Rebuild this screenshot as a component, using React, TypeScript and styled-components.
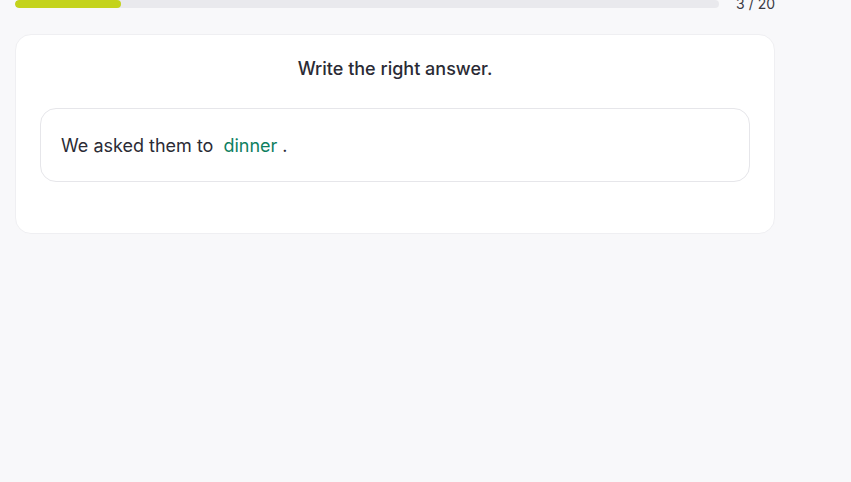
import React from "react";
import styled, { createGlobalStyle } from "styled-components";

const Global = createGlobalStyle`
  html, body { margin: 0; padding: 0; background: #f8f8fa; }
  body { font-family: Inter, "Noto Sans", sans-serif; color: #2b2b35; overflow: hidden; }
`;

const Page = styled.div`
  width: 760px;
  padding-left: 15px;
  margin-top: -7px;
`;

const TopRow = styled.div`
  display: flex;
  align-items: center;
  gap: 17px;
  height: 21px;
  margin-bottom: 20px;
`;

const Track = styled.div`
  flex: 1;
  height: 8px;
  border-radius: 4px;
  background: #e9e9ed;
  overflow: hidden;
`;

const Fill = styled.div`
  height: 100%;
  border-radius: 4px;
  background: #c4d31c;
`;

const Counter = styled.span`
  font-size: 14px;
  color: #3a3a44;
  white-space: nowrap;
`;

const Card = styled.div`
  box-sizing: border-box;
  background: #fff;
  border: 1px solid #efeff2;
  border-radius: 16px;
  padding: 22px 24px 51px;
`;

const Title = styled.h2`
  margin: 0 0 27px;
  text-align: center;
  font-size: 18px;
  line-height: 24px;
  font-weight: 500;
  color: #2b2b35;
`;

const Sentence = styled.div`
  box-sizing: border-box;
  height: 74px;
  display: flex;
  align-items: center;
  padding: 0 20px;
  border: 1px solid #e6e6ea;
  border-radius: 16px;
  font-size: 18px;
  color: #2b2b35;
`;

const Answer = styled.span`
  color: #0f7f5f;
  margin: 0 5px 0 10px;
`;

export default function App() {
  const progress = 3 / 20;
  return (
    <>
      <Global />
      <Page>
        <TopRow>
          <Track>
            <Fill style={{ width: `${progress * 100}%` }} />
          </Track>
          <Counter>3 / 20</Counter>
        </TopRow>
        <Card>
          <Title>Write the right answer.</Title>
          <Sentence>
            We asked them to<Answer>dinner</Answer>.
          </Sentence>
        </Card>
      </Page>
    </>
  );
}
